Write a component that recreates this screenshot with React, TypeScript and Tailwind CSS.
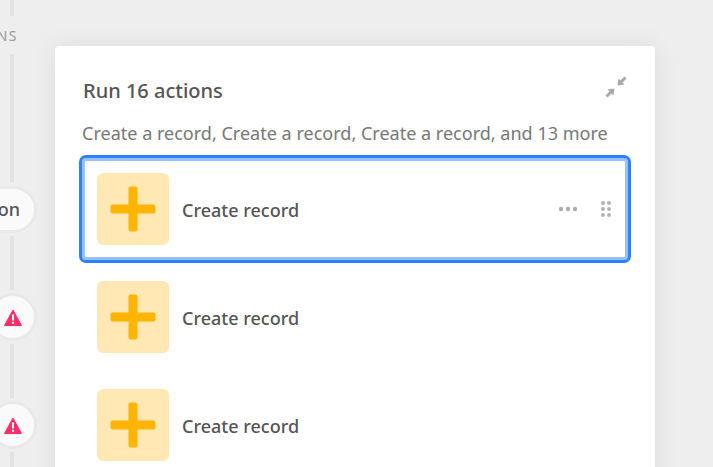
const Line = ({ className }: { className: string }) => (
  <div className={`ml-[10px] w-[4px] shrink-0 bg-[#e2e2e2] ${className}`} />
);

const WarningNode = () => (
  <div className="flex h-[48px] w-[48px] -ml-[11px] shrink-0 items-center justify-center rounded-full border-[3px] border-[#e9e9e9] bg-[#fafafa]">
    <svg width="18" height="17" viewBox="0 0 18 17">
      <path d="M9 1 L17.5 16.5 L0.5 16.5 Z" fill="#ff2d68" stroke="#ff2d68" strokeWidth="1" strokeLinejoin="round" />
      <rect x="8" y="5.5" width="2" height="6" fill="#fff" />
      <rect x="8" y="12.8" width="2" height="2" fill="#fff" />
    </svg>
  </div>
);

const Rail = () => (
  <div className="flex w-[55px] shrink-0 flex-col">
    <Line className="h-[16px]" />
    <div className="flex h-[38px] w-[18px] shrink-0 items-center justify-end">
      <span className="shrink-0 text-[14px] tracking-[1.5px] text-[#9a9a9a]">ACTIONS</span>
    </div>
    <Line className="h-[128px]" />
    <div className="mt-[4px] flex w-[37px] shrink-0 justify-end">
      <div className="flex h-[47px] shrink-0 items-center rounded-full border-[3px] border-[#e9e9e9] bg-[#fafafa] pl-[16px] pr-[14px] text-[18px] font-medium text-[#555]">
        Run action
      </div>
    </div>
    <Line className="mt-[3px] h-[54px]" />
    <div className="mt-[3px] shrink-0">
      <WarningNode />
    </div>
    <Line className="mt-[3px] h-[54px]" />
    <div className="mt-[3px] shrink-0">
      <WarningNode />
    </div>
    <Line className="mt-[3px] h-[40px]" />
  </div>
);

const Plus = () => (
  <div className="flex h-[72px] w-[72px] shrink-0 items-center justify-center rounded-[6px] bg-[#ffe8b3]">
    <svg width="46" height="46" viewBox="0 0 46 46">
      <rect x="18.5" y="0.5" width="9" height="45" rx="2" fill="#ffb400" />
      <rect x="0.5" y="18.5" width="45" height="9" rx="2" fill="#ffb400" />
    </svg>
  </div>
);

const Dots = () => (
  <svg width="20" height="6" viewBox="0 0 20 6">
    <circle cx="3" cy="3" r="2.2" fill="#acacac" />
    <circle cx="10" cy="3" r="2.2" fill="#acacac" />
    <circle cx="17" cy="3" r="2.2" fill="#acacac" />
  </svg>
);

const Grip = () => (
  <svg width="12" height="18" viewBox="0 0 12 18">
    {[3, 9, 15].map((y) => (
      <g key={y}>
        <circle cx="3" cy={y} r="2" fill="#b4b4b4" />
        <circle cx="9" cy={y} r="2" fill="#b4b4b4" />
      </g>
    ))}
  </svg>
);

const Compress = () => (
  <svg width="22" height="22" viewBox="0 0 22 22" className="-mt-[8px]">
    <path d="M21.5 2.5 L19.5 0.5 L15.5 4.5 L13.5 2.5 L12.5 9.5 L19.5 8.5 L17.5 6.5 Z" fill="#a8a8a8" />
    <path d="M0.5 19.5 L2.5 21.5 L6.5 17.5 L8.5 19.5 L9.5 12.5 L2.5 13.5 L4.5 15.5 Z" fill="#a8a8a8" />
  </svg>
);

const Row = ({ selected }: { selected?: boolean }) => (
  <div
    className={
      selected
        ? "flex h-[108px] items-center rounded-[7px] border-[3px] border-[#2f80ff] pl-[15px] pr-[16px] shadow-[inset_0_0_0_3px_#96c1ff]"
        : "flex h-[108px] items-center pl-[18px] pr-[18px]"
    }
  >
    <Plus />
    <span className="ml-[13px] pt-[2px] text-[18px] font-medium text-[#555]">Create record</span>
    {selected && (
      <div className="ml-auto flex items-center gap-[22px]">
        <Dots />
        <Grip />
      </div>
    )}
  </div>
);

export default function App() {
  return (
    <div
      className="flex h-[467px] w-[713px] overflow-hidden bg-[#eeeeee]"
      style={{ fontFamily: '"Noto Sans", "Open Sans", sans-serif' }}
    >
      <Rail />
      <div className="mt-[46px] h-[500px] w-[600px] shrink-0 rounded-[4px] bg-white pl-[24px] pr-[24px] pt-[31px] shadow-[0_0_24px_rgba(0,0,0,0.08)]">
        <div className="flex items-center justify-between pl-[4px] pr-[4px]">
          <h2 className="text-[20px] font-medium leading-[28px] text-[#555]">Run 16 actions</h2>
          <Compress />
        </div>
        <p className="mt-[16px] pl-[3px] text-[18.05px] leading-[24px] text-[#777]">
          Create a record, Create a record, Create a record, and 13 more
        </p>
        <div className="mt-[10px] flex flex-col">
          <Row selected />
          <Row />
          <Row />
        </div>
      </div>
    </div>
  );
}
